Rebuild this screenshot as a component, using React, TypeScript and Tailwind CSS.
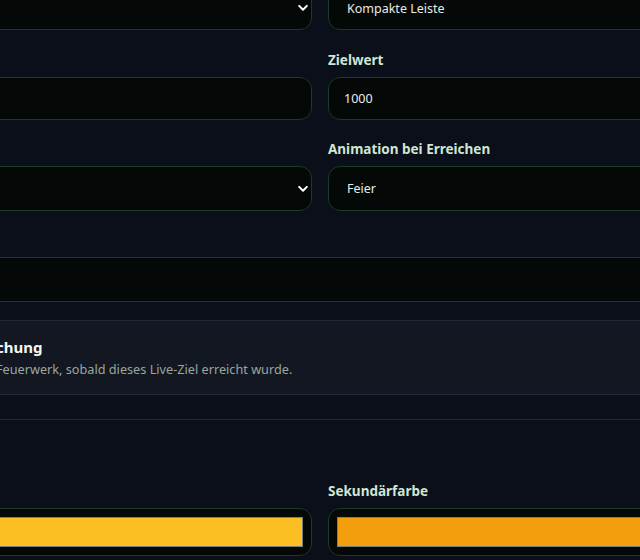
import React from "react";

function Label({ children }: { children: React.ReactNode }) {
  return (
    <div className="text-[13.5px] leading-[20px] font-bold text-[#cfe6d3] mb-[7px] whitespace-nowrap">{children}</div>
  );
}

function SelectBox({ value, h = "h-[44px]" }: { value?: string; h?: string }) {
  return (
    <div className={`relative ${h} rounded-[12px] border border-[#1c3a25] bg-[#040806] flex items-center pl-[18px] pt-[2px] text-[12.5px] text-[#e9ece9]`}>
      {value}
      <svg width="10" height="7" viewBox="0 0 10 7" className="absolute right-[3px] top-1/2 -translate-y-1/2">
        <path d="M1.2 1.4 L5 5.2 L8.8 1.4" fill="none" stroke="#ffffff" strokeWidth="2" strokeLinecap="round" strokeLinejoin="round" />
      </svg>
    </div>
  );
}

function InputBox({ value, h = "h-[43px]" }: { value?: string; h?: string }) {
  return (
    <div className={`${h} rounded-[12px] border border-[#1c3a25] bg-[#040806] flex items-center pl-[15px] pt-[1px] text-[12.5px] text-[#e9ece9]`}>
      {value}
    </div>
  );
}

function ColorBox({ color }: { color: string }) {
  return (
    <div className="h-[48px] rounded-[12px] border border-[#1c3a25] bg-[#040806] px-[8px] py-[8px] flex">
      <div className="flex-1 border border-[#7a7f86]" style={{ backgroundColor: color }} />
    </div>
  );
}

export default function App() {
  return (
    <div
      className="w-[640px] h-[560px] overflow-hidden bg-[#0a0f1a]"
      style={{ fontFamily: '"Noto Sans", "Open Sans", sans-serif' }}
    >
      <div className="-ml-[88px] w-[816px] -mt-[14px]">
        <div className="grid grid-cols-2 gap-x-4">
          <SelectBox value="" />
          <SelectBox value="Kompakte Leiste" />
        </div>

        <div className="grid grid-cols-2 gap-x-4 mt-[20px]">
          <div>
            <Label>Start</Label>
            <InputBox value="" />
          </div>
          <div>
            <Label>Zielwert</Label>
            <InputBox value="1000" />
          </div>
        </div>

        <div className="grid grid-cols-2 gap-x-4 mt-[19px]">
          <div>
            <Label>Stil</Label>
            <SelectBox value="" h="h-[45px]" />
          </div>
          <div>
            <Label>Animation bei Erreichen</Label>
            <SelectBox value="Feier" h="h-[45px]" />
          </div>
        </div>

        <div className="mt-[19px]">
          <Label>Titel</Label>
          <div className="h-[45px] rounded-[12px] border border-[#1c3a25] bg-[#040806]" />
        </div>

        <div className="mt-[18px] h-[75px] rounded-[12px] border border-[#222936] bg-[#121722] pt-[14px] pl-[16px]">
          <div className="ml-[12px]">
            <div className="-ml-[7px] text-[15px] leading-[24px] font-bold text-[#f3f5f4] whitespace-nowrap">Zielerreichung</div>
            <div className="text-[12.7px] leading-[20px] text-[#9aa79f] whitespace-nowrap">Zeigt ein Feuerwerk, sobald dieses Live-Ziel erreicht wurde.</div>
          </div>
        </div>

        <div className="mt-[24px] border-t border-[#222936] pt-[61px]">
          <div className="grid grid-cols-2 gap-x-4">
            <div>
              <Label>Farbe</Label>
              <ColorBox color="#fbbf24" />
            </div>
            <div>
              <Label>Sekundärfarbe</Label>
              <ColorBox color="#f39e0d" />
            </div>
          </div>
        </div>
      </div>
    </div>
  );
}
